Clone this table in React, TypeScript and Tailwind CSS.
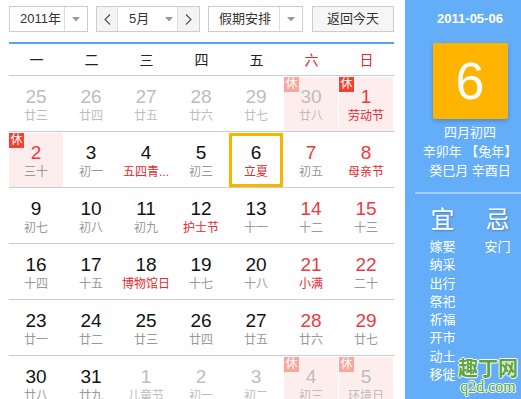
import React from "react";

type Day = {
  n: number;
  l: string;
  out?: boolean;
  red?: boolean; // weekend number red
  fest?: boolean; // lunar red
  rest?: boolean;
  today?: boolean;
};

const rows: Day[][] = [
  [
    { n: 25, l: "廿三", out: true },
    { n: 26, l: "廿四", out: true },
    { n: 27, l: "廿五", out: true },
    { n: 28, l: "廿六", out: true },
    { n: 29, l: "廿七", out: true },
    { n: 30, l: "廿八", out: true, rest: true },
    { n: 1, l: "劳动节", red: true, fest: true, rest: true },
  ],
  [
    { n: 2, l: "三十", red: true, rest: true },
    { n: 3, l: "初一" },
    { n: 4, l: "五四青...", fest: true },
    { n: 5, l: "初三" },
    { n: 6, l: "立夏", fest: true, today: true },
    { n: 7, l: "初五", red: true },
    { n: 8, l: "母亲节", red: true, fest: true },
  ],
  [
    { n: 9, l: "初七" },
    { n: 10, l: "初八" },
    { n: 11, l: "初九" },
    { n: 12, l: "护士节", fest: true },
    { n: 13, l: "十一" },
    { n: 14, l: "十二", red: true },
    { n: 15, l: "十三", red: true },
  ],
  [
    { n: 16, l: "十四" },
    { n: 17, l: "十五" },
    { n: 18, l: "博物馆日", fest: true },
    { n: 19, l: "十七" },
    { n: 20, l: "十八" },
    { n: 21, l: "小满", red: true, fest: true },
    { n: 22, l: "二十", red: true },
  ],
  [
    { n: 23, l: "廿一" },
    { n: 24, l: "廿二" },
    { n: 25, l: "廿三" },
    { n: 26, l: "廿四" },
    { n: 27, l: "廿五" },
    { n: 28, l: "廿六", red: true },
    { n: 29, l: "廿七", red: true },
  ],
  [
    { n: 30, l: "廿八" },
    { n: 31, l: "廿九" },
    { n: 1, l: "儿童节", out: true },
    { n: 2, l: "初一", out: true },
    { n: 3, l: "初二", out: true },
    { n: 4, l: "初三", out: true, rest: true },
    { n: 5, l: "环境日", out: true, rest: true },
  ],
];

const weekdays = ["一", "二", "三", "四", "五", "六", "日"];

const FONT = { fontFamily: '"Liberation Sans", "Noto Sans CJK SC", sans-serif' };

function Caret() {
  return (
    <svg width="8" height="5" viewBox="0 0 8 5">
      <path d="M0 0 L8 0 L4 4.5 Z" fill="#999" />
    </svg>
  );
}

function Cell({ d }: { d: Day }) {
  let numColor = "text-[#111]";
  if (d.red) numColor = "text-[#ec3a3f]";
  if (d.out) numColor = "text-[#bdbdbd]";
  let lunarColor = "text-[#999]";
  if (d.fest) lunarColor = "text-[#e8282d]";
  if (d.out) lunarColor = "text-[#bdbdbd]";
  const bg = d.rest ? "bg-[#fdeded]" : "";
  const border = d.today ? "border-[3px] border-[#f7b500]" : "";
  return (
    <div className="w-[55px] h-[54px] pr-[1px]">
      <div className={`relative w-full h-full flex flex-col items-center ${bg} ${border} ${d.today ? "pt-[7px]" : "pt-[10px]"}`}>
        {d.rest && (
          <div
            className={`absolute left-0 top-0 w-[15px] h-[15px] flex items-center justify-center text-white text-[12px] leading-[15px] ${
              d.out ? "bg-[#f9a79d]" : "bg-[#f2412f]"
            }`}
          >
            休
          </div>
        )}
        <div className={`text-[19px] leading-[20px] ${numColor}`}>{d.n}</div>
        <div className={`mt-[1px] text-[12px] leading-[16px] whitespace-nowrap ${lunarColor}`}>{d.l}</div>
      </div>
    </div>
  );
}

export default function App() {
  return (
    <div className="relative w-[521px] h-[399px] overflow-hidden flex bg-white" style={FONT}>
      {/* Left calendar */}
      <div className="w-[405px] shrink-0 pl-[9px] pr-[11px] pt-[6px]">
        {/* Toolbar */}
        <div className="flex h-[26px] text-[13px] text-[#333]">
          <div className="w-[79px] h-[26px] border border-[#cccccc] flex items-center">
            <div className="w-[54px] pl-[10px] leading-[24px]">2011年</div>
            <div className="h-full border-l border-[#dcdcdc] flex-1 flex items-center justify-center">
              <Caret />
            </div>
          </div>
          <div className="ml-[8px] w-[104px] h-[26px] border border-[#cccccc] flex items-center">
            <div className="w-[21px] h-full bg-[#f4f4f4] border-r border-[#dcdcdc] flex items-center justify-center text-[#555]">
              <svg width="7" height="11" viewBox="0 0 7 11">
                <path d="M6 0.5 L1 5.5 L6 10.5" fill="none" stroke="#555" strokeWidth="1.2" />
              </svg>
            </div>
            <div className="flex-1 h-full flex items-center pl-[11px]">
              <span className="w-[36px]">5月</span>
              <Caret />
            </div>
            <div className="w-[22px] h-full bg-[#f4f4f4] border-l border-[#dcdcdc] flex items-center justify-center">
              <svg width="7" height="11" viewBox="0 0 7 11">
                <path d="M1 0.5 L6 5.5 L1 10.5" fill="none" stroke="#555" strokeWidth="1.2" />
              </svg>
            </div>
          </div>
          <div className="ml-[8px] w-[95px] h-[26px] border border-[#cccccc] flex items-center">
            <div className="w-[70px] pl-[10px] leading-[24px]">假期安排</div>
            <div className="h-full border-l border-[#dcdcdc] flex-1 flex items-center justify-center">
              <Caret />
            </div>
          </div>
          <div className="ml-[9px] w-[82px] h-[26px] border border-[#cccccc] bg-[#f6f6f6] flex items-center justify-center">
            返回今天
          </div>
        </div>
        <div className="mt-[10px] h-[2px] bg-[#4ea6f2]" />
        {/* Weekday header */}
        <div className="flex h-[32px] border-b border-[#cccccc] items-center">
          {weekdays.map((w, i) => (
            <div
              key={w}
              className={`w-[55px] text-center text-[14px] pt-[1px] ${i >= 5 ? "text-[#e8282d]" : "text-[#222]"}`}
            >
              {w}
            </div>
          ))}
        </div>
        {rows.map((r, ri) => (
          <div key={ri} className="flex pt-[1px] border-b border-[#cccccc]">
            {r.map((d, di) => (
              <Cell key={di} d={d} />
            ))}
          </div>
        ))}
      </div>

      {/* Right panel */}
      <div className="w-[130px] shrink-0 bg-[#64adf8] flex flex-col items-center text-white">
        <div className="mt-[11px] text-[13px] font-bold leading-[16px]">2011-05-06</div>
        <div className="mt-[16px] w-[75px] h-[76px] rounded-[2px] bg-[#ffb400] shadow-[0_2px_4px_rgba(0,0,0,0.2)] flex items-center justify-center text-[52px] leading-none">
          6
        </div>
        <div className="mt-[4px] text-[13px] leading-[19px] text-center">
          <div>四月初四</div>
          <div>辛卯年 【兔年】</div>
          <div>癸巳月 辛酉日</div>
        </div>
        <div className="self-stretch ml-[10px] mt-[12px] h-[2px] bg-white/40" />
        <div className="self-stretch flex pl-[10px] mt-[12px]">
          <div className="w-[55px] flex flex-col items-center">
            <div className="text-[24px] leading-[28px] [text-shadow:1px_1px_2px_rgba(0,0,0,0.25)]">宜</div>
            <div className="mt-[4px] text-[13px] leading-[18.3px] text-center">
              {["嫁娶", "纳采", "出行", "祭祀", "祈福", "开市", "动土", "移徙"].map((t) => (
                <div key={t}>{t}</div>
              ))}
            </div>
          </div>
          <div className="w-[55px] flex flex-col items-center">
            <div className="text-[24px] leading-[28px] [text-shadow:1px_1px_2px_rgba(0,0,0,0.25)]">忌</div>
            <div className="mt-[4px] text-[13px] leading-[18.3px] text-center">
              <div>安门</div>
            </div>
          </div>
        </div>
      </div>

      {/* Watermark */}
      <div className="absolute left-[458px] top-[357px] flex flex-col items-center">
        <div
          className="text-[20px] leading-[22px] text-[#5aa63a] font-bold"
          style={{
            fontFamily: '"Noto Sans CJK SC", sans-serif',
            textShadow: "1px 0 #fff, -1px 0 #fff, 0 1px #fff, 0 -1px #fff",
          }}
        >
          趣丁网
        </div>
        <div
          className="text-[16px] leading-[16px] text-[#5aa63a]"
          style={{
            fontFamily: '"Liberation Serif", serif',
            textShadow: "1px 0 #fff, -1px 0 #fff, 0 1px #fff, 0 -1px #fff",
          }}
        >
          q2d.com
        </div>
      </div>
    </div>
  );
}
